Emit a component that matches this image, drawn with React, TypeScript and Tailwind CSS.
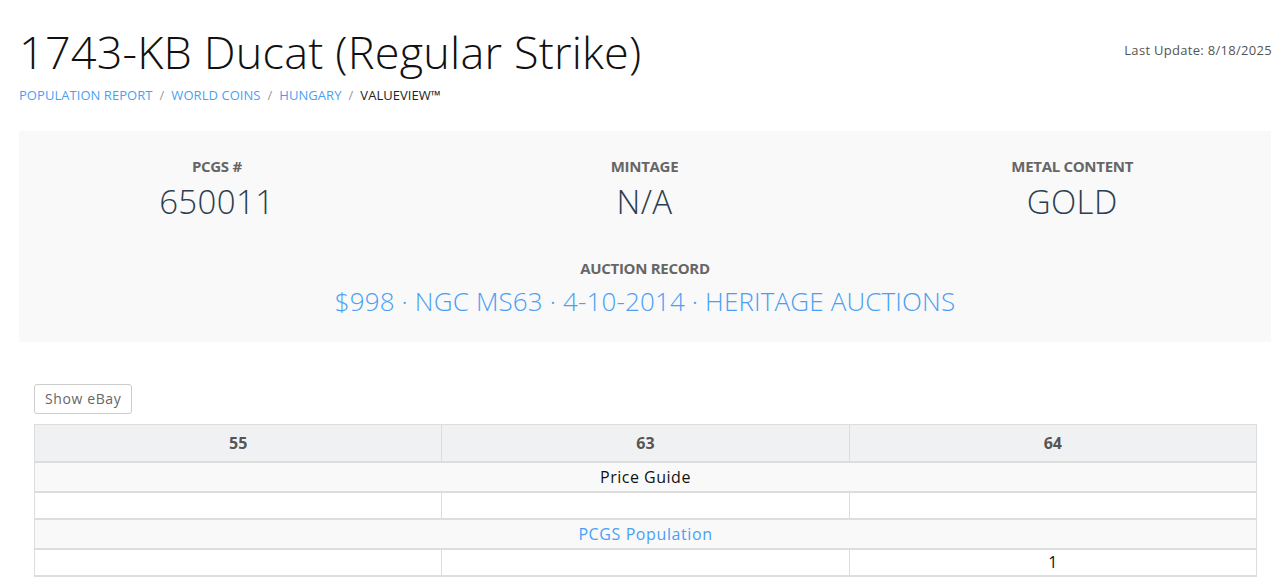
import React from "react";

const font = { fontFamily: '"Open Sans", "Noto Sans", sans-serif' };

function Stat({ label, value }: { label: string; value: string }) {
  return (
    <div className="flex flex-col items-center">
      <div className="text-[15px] font-bold text-[#666] leading-[20px] tracking-[-0.3px]">{label}</div>
      <div className="mt-[6px] text-[33px] font-light text-[#2c3e50] leading-[40px] tracking-[0.4px]">{value}</div>
    </div>
  );
}

export default function App() {
  return (
    <div className="bg-white w-[1280px] h-[578px] overflow-hidden" style={font}>
      <div className="px-[19px]">
        <div className="flex justify-between items-start">
          <h1 className="mt-[22px] text-[45px] font-light leading-[60px] text-[#111] tracking-[0.2px]">
            1743-KB Ducat (Regular Strike)
          </h1>
          <div className="mt-[40px] mr-[-11px] text-[13px] text-[#555] leading-[20px] tracking-[0.3px]">Last Update: 8/18/2025</div>
        </div>
        <div className="mt-[3px] flex items-center text-[13px] leading-[20px] uppercase tracking-[0.05px]">
          <a className="text-[#4a9ff5]">Population Report</a>
          <span className="mx-[7px] text-[#999]">/</span>
          <a className="text-[#4a9ff5]">World Coins</a>
          <span className="mx-[7px] text-[#999]">/</span>
          <a className="text-[#4a9ff5]">Hungary</a>
          <span className="mx-[7px] text-[#999]">/</span>
          <span className="text-[#222]">ValueView™</span>
        </div>

        <div className="mt-[26px] mr-[-10px] bg-[#f9f9f9] h-[211px] pt-[25px]">
          <div className="flex justify-center ml-[-16px] mr-[-15px]">
            <div className="w-[428px]"><Stat label="PCGS #" value="650011" /></div>
            <div className="w-[428px]"><Stat label="MINTAGE" value="N/A" /></div>
            <div className="w-[428px]"><Stat label="METAL CONTENT" value="GOLD" /></div>
          </div>
          <div className="mt-[36px] flex flex-col items-center">
            <div className="text-[15px] font-bold text-[#666] leading-[20px] tracking-[-0.3px]">AUCTION RECORD</div>
            <div className="mt-[3px] text-[26px] font-light text-[#4a9ff5] leading-[40px] tracking-[0.15px]">
              $998 · NGC MS63 · 4-10-2014 · HERITAGE AUCTIONS
            </div>
          </div>
        </div>

        <div className="px-[15px]">
          <button className="mt-[42px] h-[30px] px-[10px] border border-[#ccc] rounded-[3px] bg-white text-[14px] text-[#666] leading-[20px] tracking-[0.6px]">
            Show eBay
          </button>
          <table className="mt-[10px] w-[1223px] border-collapse text-[16px] table-fixed">
            <thead>
              <tr className="bg-[#f0f1f2] h-[37px]">
                <th className="border border-[#ddd] border-b-2 font-bold text-[#555] text-[16px]">55</th>
                <th className="border border-[#ddd] border-b-2 font-bold text-[#555] text-[16px]">63</th>
                <th className="border border-[#ddd] border-b-2 font-bold text-[#555] text-[16px]">64</th>
              </tr>
            </thead>
            <tbody>
              <tr className="bg-[#f9f9f9] h-[30px]">
                <td colSpan={3} className="border border-[#ddd] border-b-2 text-center text-[#111] tracking-[0.5px]">Price Guide</td>
              </tr>
              <tr className="h-[27px]">
                <td className="border border-[#ddd] border-b-2"></td>
                <td className="border border-[#ddd] border-b-2"></td>
                <td className="border border-[#ddd] border-b-2"></td>
              </tr>
              <tr className="bg-[#f9f9f9] h-[30px]">
                <td colSpan={3} className="border border-[#ddd] border-b-2 text-center text-[#4a9ff5] tracking-[0.6px]">PCGS Population</td>
              </tr>
              <tr className="h-[27px]">
                <td className="border border-[#ddd] border-b-2"></td>
                <td className="border border-[#ddd] border-b-2"></td>
                <td className="border border-[#ddd] border-b-2 text-center text-[#111]">1</td>
              </tr>
            </tbody>
          </table>
        </div>
      </div>
    </div>
  );
}
